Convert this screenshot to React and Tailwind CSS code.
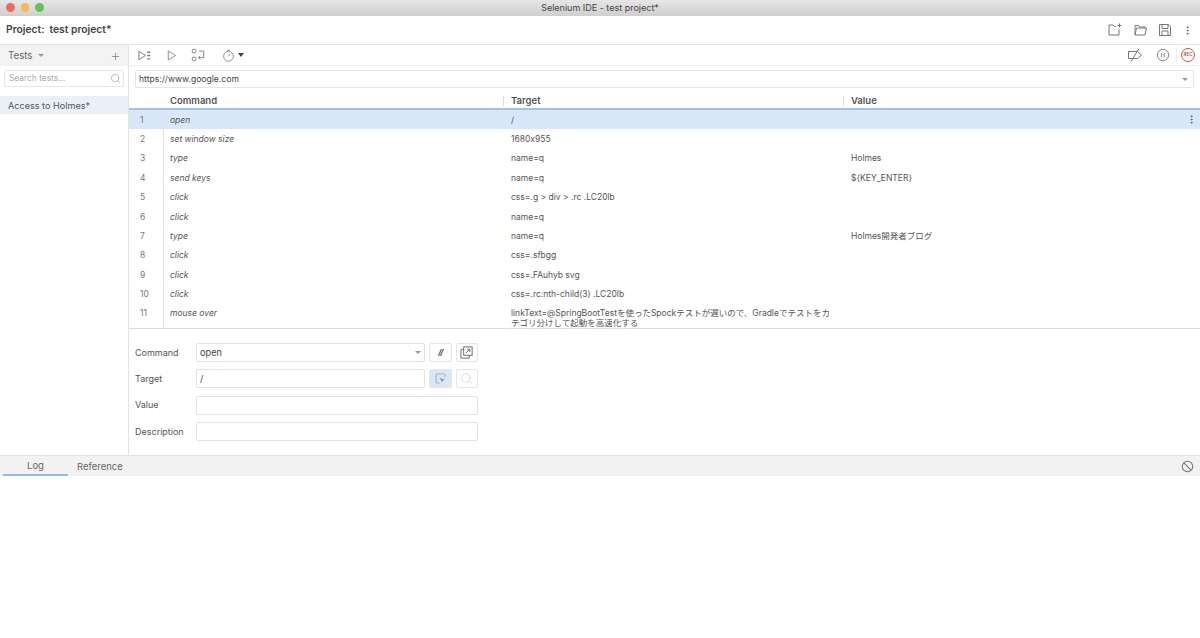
import { MoreVertical, Plus, Search } from "lucide-react";

const ROWS = [
  ["open", "/", ""],
  ["set window size", "1680x955", ""],
  ["type", "name=q", "Holmes"],
  ["send keys", "name=q", "${KEY_ENTER}"],
  ["click", "css=.g > div > .rc .LC20lb", ""],
  ["click", "name=q", ""],
  ["type", "name=q", "Holmes開発者ブログ"],
  ["click", "css=.sfbgg", ""],
  ["click", "css=.FAuhyb svg", ""],
  ["click", "css=.rc:nth-child(3) .LC20lb", ""],
  ["mouse over", "linkText=@SpringBootTestを使ったSpockテストが遅いので、Gradleでテストをカテゴリ分けして起動を高速化する", ""],
];

const Caret = ({ className = "" }) => (
  <span className={`h-0 w-0 border-x-[3px] border-t-[3px] border-x-transparent border-t-[#999] ${className}`} />
);

function Icon({ children, w = 16, h = 16, className = "", stroke = "#777" }) {
  return (
    <svg width={w} height={h} viewBox="0 0 16 16" fill="none" stroke={stroke} strokeWidth="1" className={className}>
      {children}
    </svg>
  );
}

function Row({ n, cmd, target, value, active, tall }) {
  const align = tall ? "items-start pt-[4px]" : "items-center";
  return (
    <div className={`flex text-[8.5px] leading-[10px] text-[#555] ${tall ? "h-[24px]" : "h-[19.4px]"} ${active ? "bg-[#d9e8f8]" : ""}`}>
      <div className={`flex w-[35px] shrink-0 border-r border-[#e4e4e4] pl-[11px] text-[#777] ${align}`}>{n}</div>
      <div className={`flex w-[340px] shrink-0 pl-[6px] italic ${align}`}>{cmd}</div>
      <div className={`flex w-[340px] shrink-0 pl-[7px] pr-[10px] ${align}`}>{target}</div>
      <div className={`flex flex-1 justify-between pl-[7px] pr-[3px] ${align}`}>
        <span>{value}</span>
        {active && <MoreVertical size={11} strokeWidth={2} className="text-[#555]" />}
      </div>
    </div>
  );
}

function Field({ label, children }) {
  return (
    <div className="flex h-[19px] items-center gap-[4px]">
      <div className="w-[57px] shrink-0 text-[9px] text-[#555]">{label}</div>
      {children}
    </div>
  );
}

const inputCls = "flex h-[19px] items-center rounded-[2px] border border-[#e2e2e2] bg-white px-[3px] text-[9.2px] text-[#444]";
const squareCls = "flex h-[19px] w-[22.5px] shrink-0 items-center justify-center rounded-[2px] border border-[#e6e6e6]";

export default function App() {
  return (
    <div className="flex h-[638px] w-[1200px] flex-col overflow-hidden bg-white font-['Inter','Noto_Sans_CJK_JP','Liberation_Sans',sans-serif] [font-feature-settings:'calt'_0]">
      {/* title bar */}
      <div className="relative flex h-[16px] shrink-0 items-center justify-center bg-gradient-to-b from-[#e6e6e6] to-[#cfcfcf] text-[9px] text-[#444]">
        <div className="absolute left-[6px] top-[3px] flex gap-[6px]">
          <span className="h-[8.5px] w-[8.5px] rounded-full bg-[#ee6a5f]" />
          <span className="h-[8.5px] w-[8.5px] rounded-full bg-[#f5bd4f]" />
          <span className="h-[8.5px] w-[8.5px] rounded-full bg-[#61c454]" />
        </div>
        Selenium IDE - test project*
      </div>

      {/* project bar */}
      <div className="flex h-[29px] shrink-0 items-center justify-between border-b border-[#e3e3e3] pl-[6px] pr-[7px]">
        <div className="text-[10.3px] font-semibold text-[#444]">
          Project:<span className="ml-[5px]">test project*</span>
        </div>
        <div className="flex items-center gap-[9px]">
          <Icon>
            <path d="M12 7v6H2V3h4l1.5 1.5H9" />
            <path d="M12.5 1.5v4M10.5 3.5h4" />
          </Icon>
          <Icon>
            <path d="M3 13V3.5h3.5L8 5h5v1" />
            <path d="M3 13l1.5-7h10L13 13z" />
          </Icon>
          <Icon>
            <path d="M2.5 2.5h9l2 2v9h-11z" />
            <path d="M5 2.5v4h6v-4M5 13.5V9h6v4.5" />
          </Icon>
          <MoreVertical size={11} strokeWidth={2} className="text-[#555]" />
        </div>
      </div>

      <div className="flex h-[410px] shrink-0">
        {/* tests sidebar */}
        <div className="flex w-[129px] shrink-0 flex-col border-r border-[#e3e3e3]">
          <div className="flex h-[21px] items-center justify-between bg-[#f3f3f3] pl-[8px] pr-[7px] pt-[1px]">
            <div className="flex items-center gap-[6px] text-[9.7px] text-[#666]">
              Tests <Caret />
            </div>
            <Plus size={11} strokeWidth={1.2} className="text-[#555]" />
          </div>
          <div className="mx-[4px] mt-[4px] flex h-[17px] items-center justify-between rounded-[2px] border border-[#e6e6e6] pl-[4px] pr-[2px] text-[8.4px] text-[#aaa]">
            Search tests...
            <Search size={11} strokeWidth={1} className="text-[#777]" />
          </div>
          <div className="mt-[9px] flex h-[18px] items-center bg-[#e9f0f8] pl-[8px] pt-[1px] text-[9.1px] text-[#555]">
            Access to Holmes*
          </div>
        </div>

        {/* main */}
        <div className="flex min-w-0 flex-1 flex-col">
          <div className="flex h-[21px] shrink-0 items-center justify-between border-b border-[#eeeeee] pl-[8px] pr-[5px]">
            <div className="flex items-center">
              <Icon w={15} h={15}>
                <path d="M2 3.5v9l7-4.5z" />
                <path d="M11 4.5h3M11 8h3M11 11.5h3" strokeWidth="1.4" />
              </Icon>
              <Icon w={13} h={13} className="ml-[13px]">
                <path d="M4 2.5v11l9-5.5z" />
              </Icon>
              <Icon w={14} h={14} className="ml-[13px]">
                <rect x="1.5" y="1.5" width="4" height="4" rx="1" />
                <rect x="1.5" y="10.5" width="4" height="4" rx="1" />
                <path d="M9 3.5h5.5V11H8.5M10.5 9l-2 2 2 2" />
              </Icon>
              <Icon w={13} h={13} className="ml-[17px]">
                <circle cx="8" cy="9" r="6" />
                <path d="M6 1.5h4M8 9l2-3" />
              </Icon>
              <span className="ml-[3px] h-0 w-0 border-x-[3px] border-t-[4px] border-x-transparent border-t-[#444]" />
            </div>
            <div className="flex items-center">
              <Icon>
                <path d="M1.5 4.5h9l4 3.5-4 3.5h-9z" />
                <path d="M12 1.5L4 14.5" />
              </Icon>
              <Icon w={14} h={14} className="ml-[13px]">
                <circle cx="8" cy="8" r="6.5" />
                <path d="M6.5 5.5v5M9.5 5.5v5" />
              </Icon>
              <div className="ml-[6px] flex h-[16px] items-center border-l border-[#eeeeee] pl-[4px]">
                <div className="flex h-[14px] w-[14px] items-center justify-center rounded-full border border-[#d0504a] text-[4.5px] font-bold leading-none text-[#d0504a]">
                  REC
                </div>
              </div>
            </div>
          </div>

          <div className="mx-[6px] mt-[4px] flex h-[18px] shrink-0 items-center justify-between rounded-[2px] border border-[#e6e6e6] pl-[3px] pr-[5px] text-[8.6px] text-[#444]">
            https://www.google.com
            <Caret />
          </div>

          {/* table header */}
          <div className="mt-[3px] flex h-[19px] shrink-0 items-center border-b-2 border-[#9dc3ee] pt-[3px] text-[9.5px] font-semibold text-[#555]">
            <div className="w-[35px] shrink-0" />
            <div className="w-[339px] shrink-0 pl-[6px]">Command</div>
            <div className="w-[340px] shrink-0 border-l border-[#dddddd] pl-[7px] leading-[10px]">Target</div>
            <div className="flex-1 border-l border-[#dddddd] pl-[7px] leading-[10px]">Value</div>
          </div>

          <div className="shrink-0 border-b border-[#dddddd]">
            {ROWS.map((r, i) => (
              <Row key={i} n={i + 1} cmd={r[0]} target={r[1]} value={r[2]} active={i === 0} tall={i === 10} />
            ))}
          </div>

          {/* command editor */}
          <div className="flex w-[349px] flex-col gap-[7.3px] pl-[6px] pt-[14px]">
            <Field label="Command">
              <div className={`${inputCls} w-[229px] justify-between`}>
                open <Caret />
              </div>
              <div className={`${squareCls} text-[8px] font-bold italic tracking-[-1px] text-[#444]`}>//</div>
              <div className={squareCls}>
                <Icon w={15} h={15} stroke="#666">
                  <rect x="5" y="2" width="9" height="9" />
                  <path d="M5 5H2v9h9v-3M7.5 8.5L11.5 4.5M8.5 4.5h3v3" />
                </Icon>
              </div>
            </Field>
            <Field label="Target">
              <div className={`${inputCls} w-[229px]`}>/</div>
              <div className={`${squareCls} border-[#d9e8f8] bg-[#d9e8f8]`}>
                <Icon w={13} h={13}>
                  <path d="M7 13.5H2.5v-11h11V7" stroke="#9aa7b5" />
                  <path d="M7 7l6.5 2.5-2.5 1-1 2.5z" fill="#8b98a6" stroke="none" />
                </Icon>
              </div>
              <div className={squareCls}>
                <Search size={13} strokeWidth={1} className="text-[#c4c4c4]" />
              </div>
            </Field>
            <Field label="Value">
              <div className={`${inputCls} w-[282px]`} />
            </Field>
            <Field label="Description">
              <div className={`${inputCls} w-[282px]`} />
            </Field>
          </div>
        </div>
      </div>

      {/* log panel tabs */}
      <div className="flex h-[21px] shrink-0 items-stretch border-t border-[#e3e3e3] bg-[#f2f2f2] pl-[3px] pr-[6px] text-[9.5px] text-[#666]">
        <div className="flex w-[65px] items-center justify-center border-b-2 border-[#8fbcf0] pt-[3px]">Log</div>
        <div className="ml-[9px] flex items-center pt-[3px]">Reference</div>
        <div className="ml-auto flex items-center">
          <Icon w={13} h={13}>
            <circle cx="8" cy="8" r="6.5" strokeWidth="1.3" />
            <path d="M3.5 3.5l9 9" strokeWidth="1.3" />
          </Icon>
        </div>
      </div>
      <div className="flex-1 bg-white" />
    </div>
  );
}
